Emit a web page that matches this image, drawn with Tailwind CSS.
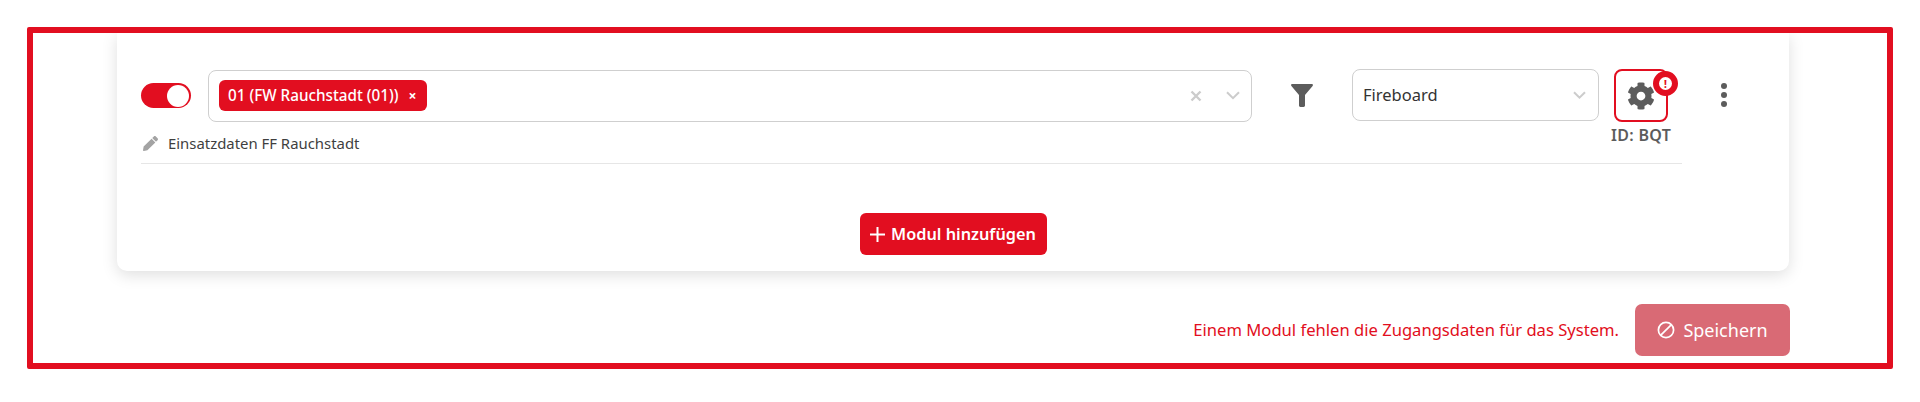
<!doctype html>
<html lang="de">
    <head>
        <meta charset="UTF-8" />
        <meta name="viewport" content="width=device-width, initial-scale=1.0" />
        <title>Module</title>
        <script src="https://cdn.jsdelivr.net/npm/@tailwindcss/browser@4"></script>
    </head>
    <body class="bg-white h-[402px] overflow-hidden pt-[27px] pl-[27px] font-['Noto_Sans',sans-serif]">
        <div class="w-[1866px] h-[342px] border-[6px] border-[#e20e20] rounded-[2px] overflow-hidden">
            <!-- module card -->
            <div class="ml-[84px] w-[1672px] h-[238px] bg-white rounded-b-[10px] shadow-[0_4px_16px_rgba(0,0,0,0.13)] pl-6 pr-[107px] pt-9">
                <div class="flex items-start h-[95px] border-b border-[#e6e6e6]">
                    <div class="w-[1111px] shrink-0">
                        <div class="flex items-center h-[53px]">
                            <div class="w-[50px] h-[25px] rounded-full bg-[#e20e20] flex justify-end items-center pr-[2px]">
                                <span class="w-[22px] h-[22px] rounded-full bg-white"></span>
                            </div>
                            <div class="ml-[17px] w-[1044px] h-[52px] rounded-[8px] border border-[#cfcfcf] flex items-center pl-[10px] pr-[10px]">
                                <span class="h-[31px] rounded-[6px] bg-[#e20e20] text-white text-[15.25px] font-medium flex items-center pl-[9px] pr-[11px]">
                                    01 (FW Rauchstadt (01))
                                    <span class="ml-[10px] text-[14px] font-bold leading-none">×</span>
                                </span>
                                <svg class="ml-auto" width="12" height="12" viewBox="0 0 12 12" fill="none" stroke="#cccccc" stroke-width="2.4"><path d="M1.5 1.5l9 9M10.5 1.5l-9 9" /></svg>
                                <svg class="ml-[24px] mr-[1px]" width="14" height="9" viewBox="0 0 14 9" fill="none" stroke="#cccccc" stroke-width="2"><path d="M1 1.2l6 6 6-6" /></svg>
                            </div>
                        </div>
                        <div class="flex items-center mt-[11px] text-[14.9px] leading-5 text-[#3f3f3f]">
                            <svg class="ml-[2px] mr-[10px]" width="15" height="15" viewBox="0 0 512 512" fill="#a3a3a3"><path d="M497.9 142.1l-46.1 46.1c-4.7 4.7-12.3 4.7-17 0l-111-111c-4.7-4.7-4.7-12.3 0-17l46.1-46.1c18.7-18.7 49.1-18.7 67.9 0l60.1 60.1c18.8 18.7 18.8 49.1 0 67.9zM284.2 99.8L21.6 362.4.4 483.9c-2.9 16.4 11.4 30.6 27.8 27.8l121.5-21.3 262.6-262.6c4.7-4.7 4.7-12.3 0-17l-111-111c-4.8-4.7-12.4-4.7-17.1 0z" /></svg>
                            Einsatzdaten FF Rauchstadt
                        </div>
                    </div>
                    <svg class="ml-[39px] mt-[15px] shrink-0" width="22" height="23" viewBox="0 0 22 23" fill="#5c5c5c"><path d="M1.2 0h19.6c1 0 1.5 1.1.8 1.9L14 11v10.6c0 .8-.6 1.4-1.4 1.4H9.4C8.6 23 8 22.400 8 21.600V11L.4 1.900C-.3 1.100.2 0 1.200 0z" /></svg>
                    <div class="ml-[39px] w-[247px] h-[52px] shrink-0 rounded-[8px] border border-[#cfcfcf] flex items-center pl-[10px] pr-[10px] text-[16.5px] text-[#333333]">
                        <span class="mt-[1px]">Fireboard</span>
                        <svg class="ml-auto mr-[2px]" width="13" height="9" viewBox="0 0 13 9" fill="none" stroke="#cccccc" stroke-width="2"><path d="M1 1.200l5.500 5.500 5.500-5.500" /></svg>
                    </div>
                    <div class="ml-[15px] w-[54px] shrink-0 flex flex-col items-center">
                        <div class="relative w-[54px] h-[53px] rounded-[8px] border-2 border-[#e20e20] flex items-center justify-center">
                            <svg width="28" height="28" viewBox="0 0 512 512" fill="#5c5c5c"><path d="M487.4 315.700l-42.600-24.600c4.300-23.200 4.300-47 0-70.200l42.600-24.600c4.900-2.800 7.100-8.600 5.500-14-11.100-35.600-30-67.800-54.700-94.600-3.800-4.100-10-5.100-14.800-2.300L380.800 110c-17.900-15.400-38.500-27.300-60.800-35.100V25.800c0-5.600-3.900-10.500-9.400-11.700-36.700-8.200-74.300-7.800-109.200 0-5.500 1.200-9.400 6.100-9.400 11.700V75c-22.200 7.900-42.800 19.800-60.800 35.100L88.700 85.500c-4.900-2.800-11-1.900-14.800 2.300-24.700 26.700-43.600 58.900-54.700 94.600-1.700 5.400.6 11.200 5.500 14L67.300 221c-4.300 23.200-4.300 47 0 70.200l-42.600 24.600c-4.900 2.800-7.100 8.600-5.500 14 11.100 35.600 30 67.800 54.700 94.600 3.800 4.100 10 5.100 14.800 2.300l42.600-24.600c17.900 15.400 38.500 27.300 60.800 35.100v49.200c0 5.600 3.900 10.500 9.400 11.700 36.700 8.200 74.300 7.800 109.200 0 5.500-1.200 9.400-6.100 9.400-11.700v-49.200c22.200-7.900 42.800-19.800 60.800-35.100l42.600 24.600c4.900 2.800 11 1.900 14.800-2.300 24.700-26.700 43.600-58.900 54.700-94.600 1.500-5.500-.7-11.300-5.600-14.100zM256 336c-44.100 0-80-35.900-80-80s35.900-80 80-80 80 35.900 80 80-35.900 80-80 80z" /></svg>
                            <span class="absolute top-0 -right-[12px] w-[25px] h-[25px] rounded-full bg-white border-[6px] border-[#e20e20] flex items-center justify-center">
                                <span class="text-[#e20e20] text-[10px] font-extrabold leading-none">!</span>
                            </span>
                        </div>
                        <span class="mt-[3px] whitespace-nowrap text-[16px] leading-5 font-semibold tracking-[0.3px] text-[#5c5c5c]">ID: BQT</span>
                    </div>
                    <div class="ml-[53px] mt-[14px] shrink-0 flex flex-col gap-[3px]">
                        <span class="w-[6px] h-[6px] rounded-full bg-[#5c5c5c]"></span>
                        <span class="w-[6px] h-[6px] rounded-full bg-[#5c5c5c]"></span>
                        <span class="w-[6px] h-[6px] rounded-full bg-[#5c5c5c]"></span>
                    </div>
                </div>
                <div class="flex justify-center mt-[49px] -ml-6 -mr-[107px]">
                    <button class="h-[42px] w-[187px] rounded-[6px] bg-[#e20e20] text-white text-[16.3px] font-semibold flex items-center justify-center gap-[6px]">
                        <svg width="15" height="15" viewBox="0 0 15 15" fill="none" stroke="#ffffff" stroke-width="2"><path d="M7.500 0v15M0 7.500h15" /></svg>
                        Modul hinzufügen
                    </button>
                </div>
            </div>
            <!-- save row -->
            <div class="flex items-center justify-end w-[1757px] mt-[33px]">
                <span class="text-[16.6px] text-[#e20e20]">Einem Modul fehlen die Zugangsdaten für das System.</span>
                <button class="ml-[16px] w-[155px] h-[52px] rounded-[7px] bg-[#d96a75] text-white text-[18px] flex items-center justify-center gap-[8px]">
                    <svg width="18" height="18" viewBox="0 0 18 18" fill="none" stroke="#ffffff" stroke-width="1.700"><circle cx="9" cy="9" r="7.600" /><path d="M3.800 14.200L14.200 3.800" /></svg>
                    Speichern
                </button>
            </div>
        </div>
    </body>
</html>
